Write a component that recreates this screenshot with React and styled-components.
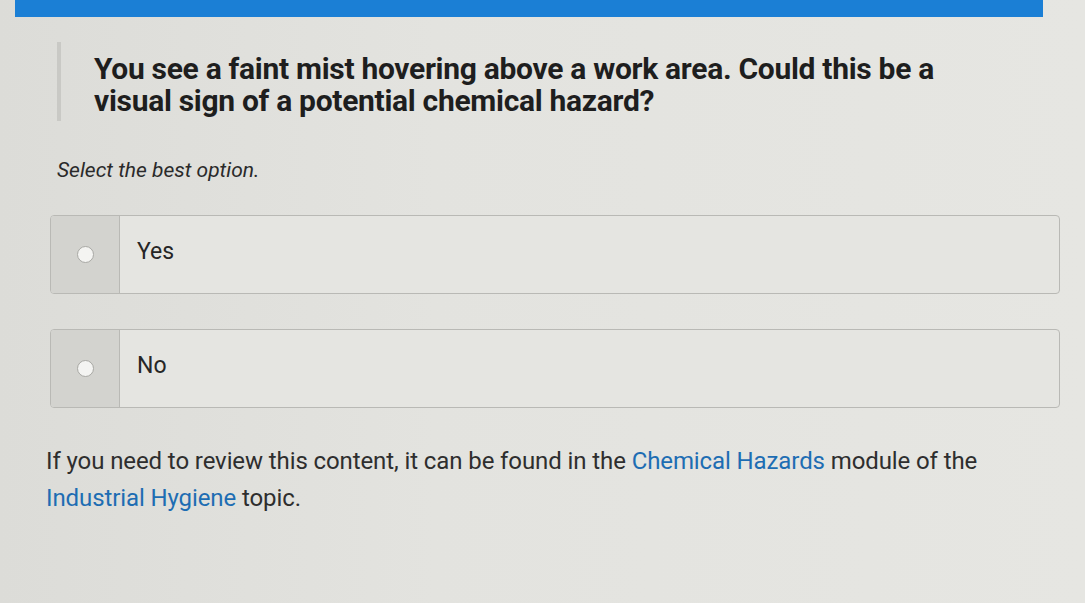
import styled, { createGlobalStyle } from "styled-components";

const GlobalStyle = createGlobalStyle`
  html, body {
    margin: 0;
    padding: 0;
    background: #e2e2de;
  }
  body {
    font-family: Roboto, "Liberation Sans", Arial, sans-serif;
    color: #2a2a2a;
  }
`;

const Page = styled.div`
  width: 1085px;
  height: 603px;
  overflow: hidden;
  background: linear-gradient(90deg, #dcdcd8 0%, #e3e3df 40%, #e6e6e2 100%);
`;

const TopBar = styled.div`
  height: 17px;
  margin: 0 42px 0 15px;
  background: #1b7fd5;
`;

const Content = styled.div`
  padding: 25px 25px 0 50px;
`;

const Question = styled.blockquote`
  margin: 0 0 0 7px;
  padding: 11px 0 4px 33px;
  border-left: 4px solid #c9c9c5;
  font-size: 30px;
  font-weight: 700;
  line-height: 32px;
  color: #1e1e1e;
  letter-spacing: -0.3px;
`;

const Prompt = styled.p`
  margin: 37px 0 0 7px;
  font-size: 21px;
  font-style: italic;
  color: #2a2a2a;
`;

const Options = styled.div`
  display: flex;
  flex-direction: column;
  gap: 35px;
  margin-top: 33px;
`;

const Option = styled.label`
  display: flex;
  height: 77px;
  border: 1px solid #b9b9b5;
  border-radius: 4px;
  overflow: hidden;
  background: #e5e5e1;
  cursor: pointer;
`;

const RadioCell = styled.div`
  flex: 0 0 68px;
  display: flex;
  align-items: center;
  justify-content: center;
  background: #d3d3cf;
  border-right: 1px solid #b9b9b5;
`;

const Radio = styled.span`
  width: 15px;
  height: 15px;
  border-radius: 50%;
  background: #f4f4f2;
  border: 1px solid #a8a8a4;
`;

const OptionText = styled.span`
  display: flex;
  align-items: center;
  padding: 0 0 6px 17px;
  font-size: 23px;
  color: #262626;
`;

const Note = styled.p`
  margin: 35px 0 0 -4px;
  font-size: 24px;
  line-height: 37px;
  letter-spacing: -0.1px;
  color: #2e2e2e;
`;

const TopicLink = styled.a`
  color: #1d6db3;
  text-decoration: none;
`;

const answers = ["Yes", "No"];

export default function App() {
  return (
    <Page>
      <GlobalStyle />
      <TopBar />
      <Content>
        <Question>
          You see a faint mist hovering above a work area. Could this be a
          <br />
          visual sign of a potential chemical hazard?
        </Question>
        <Prompt>Select the best option.</Prompt>
        <Options>
          {answers.map((answer) => (
            <Option key={answer}>
              <RadioCell>
                <Radio />
              </RadioCell>
              <OptionText>{answer}</OptionText>
            </Option>
          ))}
        </Options>
        <Note>
          If you need to review this content, it can be found in the{" "}
          <TopicLink href="#">Chemical Hazards</TopicLink> module of the
          <br />
          <TopicLink href="#">Industrial Hygiene</TopicLink> topic.
        </Note>
      </Content>
    </Page>
  );
}
